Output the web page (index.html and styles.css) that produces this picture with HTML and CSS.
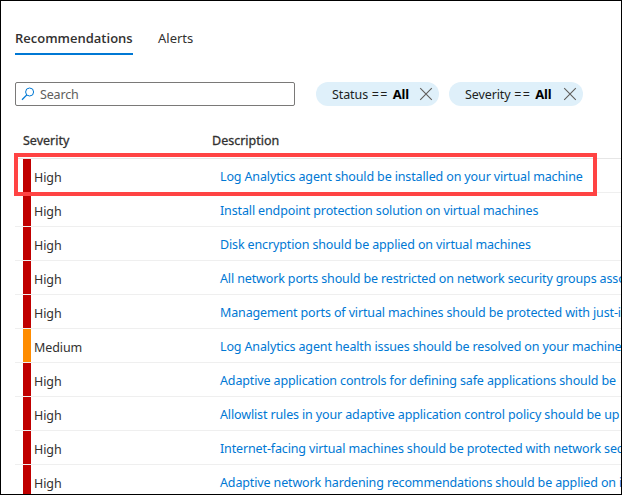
FILE: index.html
```html
<!DOCTYPE html>
<html lang="en">
<head>
<meta charset="utf-8">
<title>Recommendations</title>
<link rel="stylesheet" href="styles.css">
</head>
<body>
<main class="panel">
  <nav class="tabs">
    <a class="tab tab-active"><span>Recommendations</span></a>
    <a class="tab"><span>Alerts</span></a>
  </nav>
  <div class="filters">
    <div class="search">
      <svg class="search-icon" width="14" height="14" viewBox="0 0 14 14" fill="none" stroke="#0078d4"><circle cx="8.6" cy="5" r="4"/><path d="M5.8 7.9L1 12.8" stroke-width="1.3"/></svg>
      <span>Search</span>
    </div>
    <div class="pill pill-status"><span class="pill-text">Status <span class="op">==</span> <b>All</b></span><svg width="14" height="14" viewBox="0 0 14 14" stroke="#605e5c" stroke-width="1.1"><path d="M1.2 1.2L12.8 12.8M12.8 1.2L1.2 12.8"/></svg></div>
    <div class="pill pill-severity"><span class="pill-text">Severity <span class="op">==</span> <b>All</b></span><svg width="14" height="14" viewBox="0 0 14 14" stroke="#605e5c" stroke-width="1.1"><path d="M1.2 1.2L12.8 12.8M12.8 1.2L1.2 12.8"/></svg></div>
  </div>
  <section class="table">
    <div class="head"><span class="head-severity">Severity</span><span class="head-desc">Description</span></div>
    <div class="row"><i class="bar"></i><span class="level">High</span><a class="link">Log Analytics agent should be installed on your virtual machine</a></div>
    <div class="row"><i class="bar"></i><span class="level">High</span><a class="link">Install endpoint protection solution on virtual machines</a></div>
    <div class="row"><i class="bar"></i><span class="level">High</span><a class="link">Disk encryption should be applied on virtual machines</a></div>
    <div class="row"><i class="bar"></i><span class="level">High</span><a class="link">All network ports should be restricted on network security groups asso</a></div>
    <div class="row"><i class="bar"></i><span class="level">High</span><a class="link">Management ports of virtual machines should be protected with just-i</a></div>
    <div class="row"><i class="bar bar-medium"></i><span class="level">Medium</span><a class="link">Log Analytics agent health issues should be resolved on your machine</a></div>
    <div class="row"><i class="bar"></i><span class="level">High</span><a class="link">Adaptive application controls for defining safe applications should be</a></div>
    <div class="row"><i class="bar"></i><span class="level">High</span><a class="link">Allowlist rules in your adaptive application control policy should be up</a></div>
    <div class="row"><i class="bar"></i><span class="level">High</span><a class="link">Internet-facing virtual machines should be protected with network sec</a></div>
    <div class="row"><i class="bar"></i><span class="level">High</span><a class="link">Adaptive network hardening recommendations should be applied on i</a></div>
    <div class="highlight"></div>
  </section>
</main>
</body>
</html>
```
FILE: styles.css
```css
* { box-sizing: border-box; }
body { margin: 0; background: #fff; }
.panel {
  width: 622px;
  height: 495px;
  border: 1px solid #000;
  overflow: hidden;
  font: 12.5px/18px "Noto Sans", "Open Sans", sans-serif;
  color: #323130;
  white-space: nowrap;
}
.tabs { display: flex; gap: 25px; padding: 28px 0 0 14px; height: 54px; font-size: 13px; }
.tab { height: 26px; }
.tab-active { width: 118px; border-bottom: 2px solid #0078d4; font-family: "Open Sans", sans-serif; font-weight: 600; letter-spacing: 0; }
.filters { display: flex; align-items: center; height: 26px; margin: 26px 0 0 14px; }
.search {
  display: flex;
  align-items: center;
  width: 280px;
  height: 24px;
  padding: 1px 0 0 5px;
  gap: 5px;
  border: 1px solid #7a7978;
  border-radius: 2px;
  color: #605e5c;
  letter-spacing: -0.15px;
}
.search-icon { margin-top: -1px; }
.pill {
  display: flex;
  align-items: center;
  justify-content: space-between;
  height: 24px;
  padding: 0 6px 0 16px;
  border-radius: 12px;
  background: #dff0fa;
  color: #201f1e;
}
.pill-text { padding-top: 1px; letter-spacing: -0.1px; }
.op { margin: 0 0.5px; letter-spacing: 1.5px; }
.pill-status { width: 123px; margin-left: 21px; }
.pill-severity { width: 134px; margin-left: 10px; }
.pill b { font-weight: 700; font-size: 13px; color: #000; }
.table { position: relative; margin-left: 14px; }
.head {
  display: flex;
  height: 52px;
  padding: 25px 0 0 8px;
  border-bottom: 1px solid #e6e6e6;
  -webkit-text-stroke: 0.3px currentColor;
}
.head-severity { width: 189px; }
.row { display: flex; height: 34px; padding-left: 8px; border-bottom: 1px solid #efefef; }
.row > * { flex-shrink: 0; }
.bar { width: 8px; height: 33px; background: #c00000; }
.bar-medium { background: #ff8c00; }
.level { width: 189px; padding: 10px 0 0 3px; letter-spacing: -0.1px; }
.link { padding-top: 9px; color: #0078d4; letter-spacing: -0.135px; }
.highlight { position: absolute; left: -1px; top: 46px; width: 583px; height: 43px; border: 4px solid #ff4343; }
```
